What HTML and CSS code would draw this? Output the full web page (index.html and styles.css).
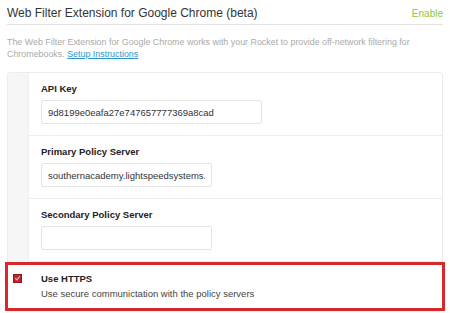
FILE: index.html
```html
<!DOCTYPE html>
<html lang="en">
<head>
    <meta charset="UTF-8">
    <title>Web Filter Extension</title>
    <link rel="stylesheet" href="styles.css">
</head>
<body>

<div class="page">
    <div class="header">
        <h2>Web Filter Extension for Google Chrome (beta)</h2>
        <a href="#" class="enable">Enable</a>
    </div>
    <p class="desc">The Web Filter Extension for Google Chrome works with your Rocket to provide off-network filtering for Chromebooks. <a href="#">Setup Instructions</a></p>

    <div class="panel">
        <div class="row">
            <div class="side"></div>
            <div class="field">
                <label for="api-key">API Key</label>
                <input type="text" id="api-key" class="wide" value="9d8199e0eafa27e747657777369a8cad">
            </div>
        </div>
        <div class="row">
            <div class="side"></div>
            <div class="field">
                <label for="primary">Primary Policy Server</label>
                <input type="text" id="primary" value="southernacademy.lightspeedsystems.com">
            </div>
        </div>
        <div class="row">
            <div class="side"></div>
            <div class="field">
                <label for="secondary">Secondary Policy Server</label>
                <input type="text" id="secondary" value="">
            </div>
        </div>
        <div class="row check-row">
            <div class="side"><span class="check"></span></div>
            <div class="field">
                <div class="check-title">Use HTTPS</div>
                <div class="check-desc">Use secure communictation with the policy servers</div>
            </div>
        </div>
    </div>
</div>

</body>
</html>
```

FILE: styles.css
```css
body {
    font-family: "Liberation Sans", Arial, sans-serif;
    background-color: #fff;
    color: #333;
    margin: 0;
    padding: 0;
}
.page {
    padding: 0 7px;
}
.header {
    display: flex;
    justify-content: space-between;
    align-items: baseline;
    padding: 6px 0 4px;
    border-bottom: 1px solid #e2e2e2;
}
.header h2 {
    margin: 0;
    font-size: 12px;
    line-height: 14px;
    font-weight: normal;
    color: #333;
}
.enable {
    font-size: 10px;
    color: #8cc63e;
    text-decoration: none;
}
.desc {
    margin: 11px 0 12px;
    font-size: 8.9px;
    line-height: 12px;
    color: #aaa;
}
.desc a {
    color: #2b98c9;
}
.panel {
    border: 1px solid #ececec;
    border-radius: 3px;
}
.row {
    display: flex;
}
.side {
    width: 20px;
    flex-shrink: 0;
    background-color: #f6f6f6;
    border-right: 1px solid #efefef;
}
.field {
    flex: 1;
    padding: 10px 12px 11px;
    border-bottom: 1px solid #eee;
}
.field label {
    display: block;
    font-size: 9.5px;
    line-height: 12px;
    font-weight: bold;
    margin-bottom: 5px;
    color: #222;
}
.field input {
    display: block;
    width: 171px;
    height: 24px;
    padding: 0 6px;
    box-sizing: border-box;
    border: 1px solid #e3e3e3;
    border-radius: 2px;
    font-family: inherit;
    font-size: 9.5px;
    color: #333;
}
.field input.wide {
    width: 221px;
}
/* highlighted row: red annotation frame runs a little past the panel */
.check-row {
    margin: 0 -3px;
    outline: 3px solid #d42a2e;
    outline-offset: -3px;
}
.check-row .side {
    width: 24px;
    background-color: #fff;
    border-right: none;
    display: flex;
    justify-content: center;
    align-items: flex-start;
    padding-top: 12px;
}
.check-row .field {
    padding-top: 11px;
    padding-bottom: 11px;
    border-bottom: none;
}
.check {
    width: 7px;
    height: 7px;
    background-color: #c3242b;
    border: 1px solid #8e1a1f;
    position: relative;
}
.check::after {
    content: "";
    position: absolute;
    left: 2px;
    top: 0;
    width: 2px;
    height: 4px;
    border: solid #ccc;
    border-width: 0 1px 1px 0;
    transform: rotate(40deg);
}
.check-title {
    font-size: 9.5px;
    line-height: 12px;
    font-weight: bold;
    color: #222;
    margin-bottom: 3px;
}
.check-desc {
    font-size: 9.5px;
    line-height: 12px;
    color: #444;
}
```
